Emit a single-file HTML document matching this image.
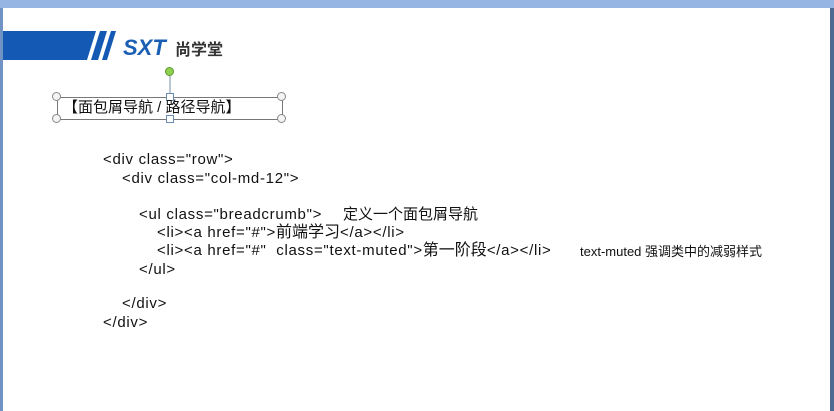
<!DOCTYPE html>
<html><head><meta charset="utf-8"><style>
body{margin:0;width:834px;height:411px;overflow:hidden;background:#fff;position:relative;font-family:"Liberation Sans","Noto Sans CJK SC",sans-serif;}
.top{position:absolute;left:0;top:0;width:834px;height:8px;background:#97b5e3;}
.l{position:absolute;left:0;top:8px;width:3px;height:403px;background:#6f93c4;}
.r{position:absolute;right:0;top:8px;width:4px;height:403px;background:#4e6a90;}
.t{position:absolute;font-size:15px;letter-spacing:0.7px;color:#111;white-space:pre;line-height:18px;}
.t b{font-weight:normal;font-size:16px;letter-spacing:0;}
.h{position:absolute;width:7px;height:7px;border:1px solid #888;border-radius:50%;background:#f4f4f4;}
.sq{position:absolute;width:6px;height:6px;border:1px solid #6a8bb0;background:#fff;}
</style></head><body>
<div class="top"></div><div class="l"></div><div class="r"></div>
<svg style="position:absolute;left:0;top:0" width="300" height="70">
<polygon points="3,31 92,31 83,60 3,60" fill="#1459b3"/>
<polygon points="91,31 96,31 87,60 82,60" fill="#1459b3"/>
<polygon points="100,31 107,31 98,60 91,60" fill="#1459b3"/>
<polygon points="111,31 116,31 107,60 102,60" fill="#1459b3"/>
<text x="123" y="55" font-family="Liberation Sans" font-weight="bold" font-style="italic" font-size="22" fill="#1a5fb4">SXT</text>
<text x="175" y="55" font-family="Noto Sans CJK SC" font-weight="bold" font-size="16" fill="#333">尚学堂</text>
</svg>
<svg style="position:absolute;left:0;top:0" width="300" height="130">
<line x1="170" y1="73" x2="170" y2="97" stroke="#7a8fa8"/>
<rect x="57.5" y="97.5" width="225" height="22" fill="none" stroke="#777"/>
</svg>
<div class="h" style="left:165px;top:67px;background:#8fd14f;border-color:#5a9a2a"></div>
<div class="h" style="left:52px;top:92px"></div><div class="h" style="left:277px;top:92px"></div>
<div class="h" style="left:52px;top:114px"></div><div class="h" style="left:277px;top:114px"></div>
<div class="sq" style="left:166px;top:93px"></div><div class="sq" style="left:166px;top:115px"></div>
<div class="t" style="left:63px;top:99px;font-size:15px;letter-spacing:0">【面包屑导航 / 路径导航】</div>
<div class="t" style="left:103px;top:151px">&lt;div class="row"&gt;</div>
<div class="t" style="left:122px;top:170px">&lt;div class="col-md-12"&gt;</div>
<div class="t" style="left:139px;top:206px">&lt;ul class="breadcrumb"&gt;</div>
<div class="t" style="left:343px;top:206px;letter-spacing:0">定义一个面包屑导航</div>
<div class="t" style="left:157px;top:224px">&lt;li&gt;&lt;a href="#"&gt;<b>前端学习</b>&lt;/a&gt;&lt;/li&gt;</div>
<div class="t" style="left:157px;top:242px">&lt;li&gt;&lt;a href="#"  class="text-muted"&gt;<b>第一阶段</b>&lt;/a&gt;&lt;/li&gt;</div>
<div class="t" style="left:580px;top:243px;font-size:13px;letter-spacing:0">text-muted 强调类中的减弱样式</div>
<div class="t" style="left:139px;top:261px">&lt;/ul&gt;</div>
<div class="t" style="left:122px;top:295px">&lt;/div&gt;</div>
<div class="t" style="left:103px;top:314px">&lt;/div&gt;</div>
</body></html>
